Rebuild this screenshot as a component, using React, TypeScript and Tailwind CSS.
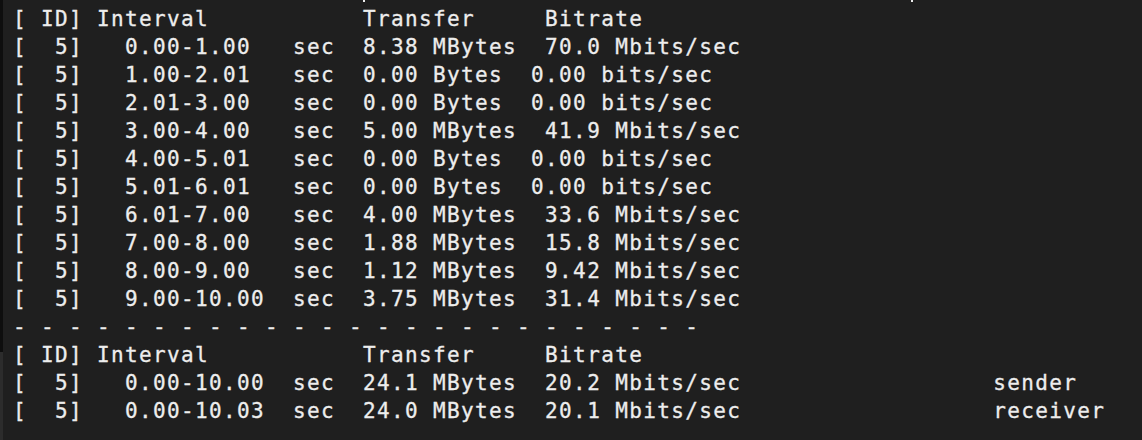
import React from "react";

const lines: string[] = [
  "[ ID] Interval           Transfer     Bitrate",
  "[  5]   0.00-1.00   sec  8.38 MBytes  70.0 Mbits/sec",
  "[  5]   1.00-2.01   sec  0.00 Bytes  0.00 bits/sec",
  "[  5]   2.01-3.00   sec  0.00 Bytes  0.00 bits/sec",
  "[  5]   3.00-4.00   sec  5.00 MBytes  41.9 Mbits/sec",
  "[  5]   4.00-5.01   sec  0.00 Bytes  0.00 bits/sec",
  "[  5]   5.01-6.01   sec  0.00 Bytes  0.00 bits/sec",
  "[  5]   6.01-7.00   sec  4.00 MBytes  33.6 Mbits/sec",
  "[  5]   7.00-8.00   sec  1.88 MBytes  15.8 Mbits/sec",
  "[  5]   8.00-9.00   sec  1.12 MBytes  9.42 Mbits/sec",
  "[  5]   9.00-10.00  sec  3.75 MBytes  31.4 Mbits/sec",
  "- - - - - - - - - - - - - - - - - - - - - - - - -",
  "[ ID] Interval           Transfer     Bitrate",
  "[  5]   0.00-10.00  sec  24.1 MBytes  20.2 Mbits/sec                  sender",
  "[  5]   0.00-10.03  sec  24.0 MBytes  20.1 Mbits/sec                  receiver",
];

export default function App() {
  return (
    <div className="w-[1142px] h-[440px] bg-[#1f1f1f] flex overflow-hidden">
      <div className="w-[3px] flex flex-col">
        <div className="h-[352px] bg-[#0e0e0e]" />
        <div className="flex-1 bg-[#2c2c2c]" />
      </div>
      <div
        className="flex-1 pl-[10px] text-[#ededed] text-[21px] tracking-[1.36px] leading-[28px] whitespace-pre [-webkit-text-stroke:0.3px_#ededed]"
        style={{ fontFamily: '"DejaVu Sans Mono", "Liberation Mono", monospace' }}
      >
        <div className="h-[5px] flex items-start">
          <div className="ml-[350px] w-[2px] h-[2px] bg-[#ededed]" />
          <div className="ml-[546px] w-[2px] h-[2px] bg-[#ededed]" />
        </div>
        {lines.map((l, i) => (
          <div key={i} className="h-[28px]">
            {l}
          </div>
        ))}
      </div>
    </div>
  );
}
